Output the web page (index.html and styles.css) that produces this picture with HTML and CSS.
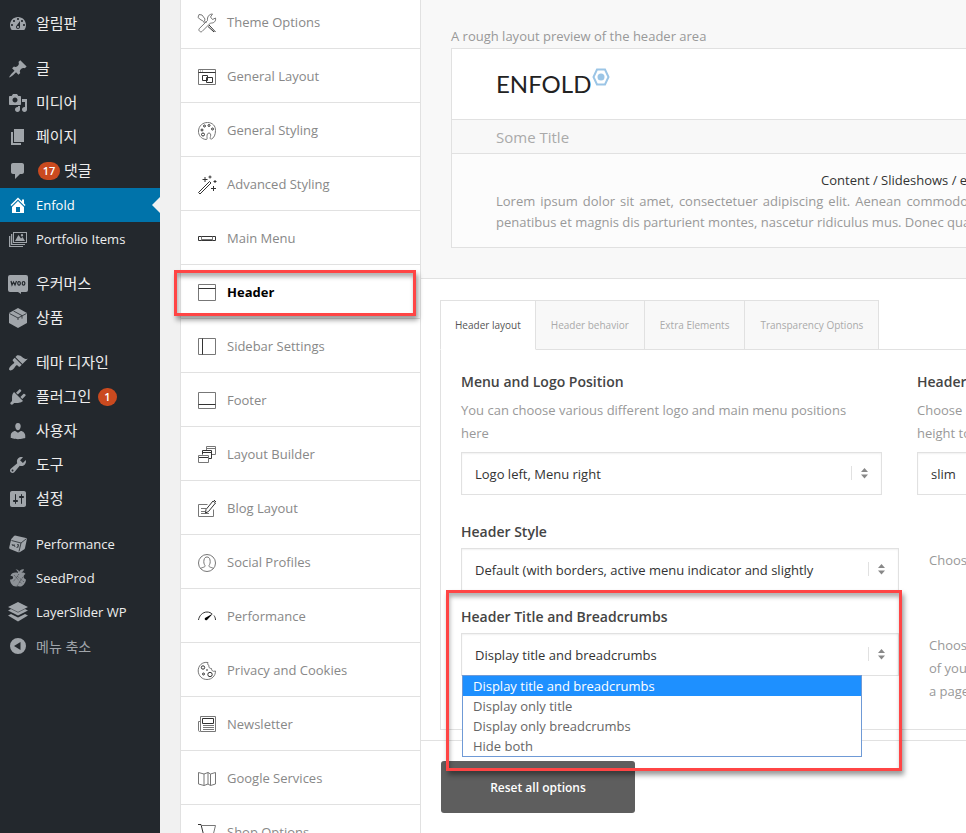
FILE: index.html
```html
<!DOCTYPE html>
<html lang="ko">
<head>
<meta charset="utf-8">
<title>Enfold Theme Options</title>
<link rel="stylesheet" href="styles.css">
</head>
<body>
<div class="app">
  <nav class="wp-menu" aria-label="Admin">
    <a class="wp-item" href="#"><svg class="wp-icon" viewBox="0 0 20 20"><path d="M3.76 16h12.48c1.1-1.37 1.76-3.11 1.76-5 0-4.42-3.58-8-8-8s-8 3.58-8 8c0 1.89.66 3.63 1.76 5zM10 4c.55 0 1 .45 1 1s-.45 1-1 1-1-.45-1-1 .45-1 1-1zM6 6c.55 0 1 .45 1 1s-.45 1-1 1-1-.45-1-1 .45-1 1-1zm8 0c.55 0 1 .45 1 1s-.45 1-1 1-1-.45-1-1 .45-1 1-1zm-5.37 5.55L12 7v6c0 1.1-.9 2-2 2s-2-.9-2-2c0-.57.24-1.08.63-1.45zM4 10c.55 0 1 .45 1 1s-.45 1-1 1-1-.45-1-1 .45-1 1-1zm12 0c.55 0 1 .45 1 1s-.45 1-1 1-1-.45-1-1 .45-1 1-1zm-5 3c0-.55-.45-1-1-1s-1 .45-1 1 .45 1 1 1 1-.45 1-1z"/></svg><span class="ko">알림판</span></a>
    <div class="wp-gap"></div>
    <a class="wp-item" href="#"><svg class="wp-icon" viewBox="0 0 20 20"><path d="M10.44 3.02l1.82-1.82 6.36 6.35-1.83 1.82c-1.05-.68-2.48-.57-3.41.36l-.75.75c-.92.93-1.04 2.35-.35 3.41l-1.83 1.82-2.41-2.41-2.8 2.79c-.42.42-3.38 2.71-3.8 2.29s1.86-3.39 2.28-3.81l2.79-2.79L4.1 9.36l1.83-1.82c1.05.69 2.48.57 3.4-.36l.75-.75c.93-.92 1.05-2.35.36-3.41z"/></svg><span class="ko">글</span></a>
    <a class="wp-item" href="#"><svg class="wp-icon" viewBox="0 0 20 20"><path d="M13 11V4c0-.55-.45-1-1-1h-1.67L9 1H5L3.67 3H2c-.55 0-1 .45-1 1v7c0 .55.45 1 1 1h10c.55 0 1-.45 1-1zM7 4.5c1.38 0 2.5 1.12 2.5 2.5S8.38 9.5 7 9.5 4.5 8.38 4.5 7 5.62 4.5 7 4.5zM14 6h5v10.5c0 1.38-1.12 2.5-2.5 2.5S14 17.88 14 16.5s1.12-2.5 2.5-2.5c.17 0 .34.02.5.05V9h-3V6zm-4 8.05V13h2v3.5c0 1.38-1.12 2.5-2.5 2.5S7 17.88 7 16.5 8.12 14 9.5 14c.17 0 .34.02.5.05z"/></svg><span class="ko">미디어</span></a>
    <a class="wp-item" href="#"><svg class="wp-icon" viewBox="0 0 20 20"><path d="M6 15V2h10v13H6zm-1 1h8v2H3V5h2v11z"/></svg><span class="ko">페이지</span></a>
    <a class="wp-item" href="#"><svg class="wp-icon" viewBox="0 0 20 20"><path d="M5 2h9c1.1 0 2 .9 2 2v7c0 1.1-.9 2-2 2h-2l-5 5v-5H5c-1.1 0-2-.9-2-2V4c0-1.1.9-2 2-2z"/></svg><span class="count count-lead">17</span><span class="ko">댓글</span></a>
    <a class="wp-item wp-current" href="#"><svg class="wp-icon" viewBox="0 0 20 20"><path d="M16 8.5l1.53 1.53-1.06 1.06L10 4.6l-6.47 6.49-1.06-1.06L10 2.5l4 4v-2h2v4zm-6-2.46l6 5.99V18H4v-5.97zM12 17v-5H8v5h4z"/></svg>Enfold</a>
    <a class="wp-item" href="#"><svg class="wp-icon" viewBox="0 0 20 20"><path fill-rule="evenodd" d="M5 3h14v11H5zM6 4v9h12V4zM3 5h1.300v10H17v1H3zM1 7h1.300v10H15v1H1zM7 12l3.500-6 2.500 3.500L14.500 8l2.500 4zM14 5a1.200 1.200 0 1 1 0 2.400A1.200 1.200 0 0 1 14 5z"/></svg>Portfolio Items</a>
    <div class="wp-gap"></div>
    <a class="wp-item" href="#"><svg class="wp-icon" viewBox="0 0 20 20"><path d="M2 1h16q2 0 2 2v13q0 2-2 2h-5v2l-3-2H2q-2 0-2-2V3q0-2 2-2z"/><path class="cut" d="M3 7l1 4 1.500-3L7 11l1.500-4M11 7.500a1.300 1.800 0 1 0 .1 0M15.500 7.500a1.300 1.800 0 1 0 .1 0"/></svg><span class="ko">우커머스</span></a>
    <a class="wp-item" href="#"><svg class="wp-icon" viewBox="0 0 20 20"><path d="M10 0l9 5v10l-9 5-9-5V5z"/><path class="cut thin" d="M1.500 5.500L10 10l8.500-4.500M10 10v2M5.500 3l8.500 4.600v3"/></svg><span class="ko">상품</span></a>
    <div class="wp-gap"></div>
    <a class="wp-item" href="#"><svg class="wp-icon" viewBox="0 0 20 20"><path d="M14.48 11.06L7.41 3.99l1.5-1.5c.5-.56 2.3-.47 3.51.32 1.21.8 1.43 1.28 2.91 2.1 1.18.64 2.45 1.26 4.45.85zm-.71.71L6.7 4.7 4.93 6.470c-.39.39-.39 1.02 0 1.41l1.06 1.06c.39.39.39 1.03 0 1.420-.6.6-1.43 1.11-2.21 1.69-.35.26-.7.53-1.01.84C1.43 14.23.4 16.08 1.4 17.07c.99 1 2.84-.03 4.18-1.36.31-.31.58-.66.85-1.020.57-.78 1.08-1.61 1.69-2.21.39-.39 1.02-.39 1.41 0l1.06 1.06c.39.39 1.02.39 1.41 0z"/></svg><span class="ko">테마 디자인</span></a>
    <a class="wp-item" href="#"><svg class="wp-icon" viewBox="0 0 20 20"><path d="M13.11 4.36L9.87 7.6 8 5.73l3.24-3.24c.35-.34 1.05-.2 1.56.32.52.51.66 1.21.31 1.55zm-8 1.77l.91-1.12 9.01 9.01-1.19.84c-.71.71-2.63 1.16-3.82 1.16H6.14L4.9 17.26c-.59.59-1.54.59-2.12 0-.59-.58-.59-1.53 0-2.12l1.24-1.24v-3.88c0-1.13.4-3.19 1.09-3.89zm7.26 3.97l3.24-3.24c.34-.35 1.04-.21 1.55.31.52.51.66 1.21.31 1.55l-3.24 3.25z"/></svg><span class="ko">플러그인</span><span class="count count-tail">1</span></a>
    <a class="wp-item" href="#"><svg class="wp-icon" viewBox="0 0 20 20"><path d="M10 9.25c-2.27 0-2.73-3.44-2.73-3.44C7 4.02 7.82 2 9.97 2c2.16 0 2.98 2.02 2.71 3.81 0 0-.41 3.44-2.68 3.44zm0 2.57L12.72 10c2.39 0 4.52 2.33 4.52 4.53v2.49s-3.65 1.13-7.24 1.13c-3.65 0-7.24-1.13-7.24-1.13v-2.49c0-2.25 1.94-4.48 4.47-4.48z"/></svg><span class="ko">사용자</span></a>
    <a class="wp-item" href="#"><svg class="wp-icon" viewBox="0 0 20 20"><path d="M16.68 9.77c-1.34 1.34-3.3 1.67-4.95.99l-5.41 6.52c-.99.99-2.59.99-3.58 0s-.99-2.59 0-3.57l6.52-5.42c-.68-1.65-.35-3.61.99-4.95 1.28-1.28 3.12-1.62 4.72-1.06l-2.89 2.89 2.82 2.82 2.86-2.87c.53 1.58.18 3.39-1.08 4.65zM3.81 16.21c.4.39 1.04.39 1.43 0 .4-.4.4-1.04 0-1.43-.39-.4-1.03-.4-1.43 0-.39.39-.39 1.03 0 1.43z"/></svg><span class="ko">도구</span></a>
    <a class="wp-item" href="#"><svg class="wp-icon" viewBox="0 0 20 20"><path d="M18 16V4c0-1.100-.9-2-2-2H4c-1.100 0-2 .9-2 2v12c0 1.100.9 2 2 2h12c1.100 0 2-.9 2-2zM8 11h1c.55 0 1 .45 1 1s-.45 1-1 1H8v1.500c0 .28-.22.5-.5.5s-.5-.22-.5-.5V13H6c-.55 0-1-.45-1-1s.45-1 1-1h1V5.500c0-.28.22-.5.5-.5s.5.22.5.5V11zm5-2h-1c-.55 0-1-.45-1-1s.45-1 1-1h1V5.500c0-.28.22-.5.5-.5s.5.22.5.5V7h1c.55 0 1 .45 1 1s-.45 1-1 1h-1v5.500c0 .28-.22.5-.5.5s-.5-.22-.5-.5V9z"/></svg><span class="ko">설정</span></a>
    <div class="wp-gap"></div>
    <a class="wp-item" href="#"><svg class="wp-icon" viewBox="0 0 20 20"><path d="M7 1.500L18 4q1 .3.800 1.500L17 14q-.3 1-1 1.500L12 18q-1 .5-2 .2L2 15q-1-.5-.8-1.500L3 6q.2-1 1-1.700L6 2z"/><path class="cut thin" d="M3.500 6.500L13 9l5-4M13 9l-2 8.500M4 10l1 2 1-1.500L7 13M9 10.500l2 .5-1.500 1 1 1-2 .5"/></svg>Performance</a>
    <a class="wp-item" href="#"><svg class="wp-icon dim" viewBox="0 0 20 20"><path d="M10 5c0-2-1.500-3-2.500-3.500C10 1 11 2.500 11 4c1-2 3-3 5-2.500-.5 2-2 3-4 3.500 3-1 5 0 5.500 1-2.500 1.500-2.500 4 .5 5.500-.5 4-3.500 7.500-6.500 7-1-.3-2-.3-3 0C5 19 2 15 2 11.500c2 .5 3.500-1 3-2.500C4.500 7.500 3 8 2.500 8 3.500 4.500 7 4 10 5z"/><path class="cut dots" d="M6 7l8 9M11 6L5 14M15 9l-6 9M9 8l7 6"/></svg>SeedProd</a>
    <a class="wp-item" href="#"><svg class="wp-icon" viewBox="0 0 20 20"><path d="M10 0l10 5-10 5L0 5zM0 8.500l3-1.400 7 3.500 7-3.500 3 1.400-10 5zM0 13.500l3-1.400 7 3.500 7-3.500 3 1.400-10 6z"/></svg>LayerSlider WP</a>
    <button class="wp-item wp-collapse" type="button"><svg class="wp-icon" viewBox="0 0 20 20"><path fill-rule="evenodd" d="M10 2a8 8 0 1 1 0 16 8 8 0 0 1 0-16zM12.500 6v8L6 10z"/></svg><span>메뉴 축소</span></button>
  </nav>

  <nav class="tabs-nav" aria-label="Theme options">
    <a class="nav-item" href="#"><svg class="nav-icon" viewBox="0 0 20 20"><path d="M1 4.500L2 1.500l3 .5 3 4-.5 2 2 2M4 7L1 4.500M4 7l1.500.5 2 2.500M10.500 7.500C10 4 12 1 15.500 1L13.500 4l2 2.500L18.500 5c.7 3-1.500 5.500-5 5L5 18.500c-1.500 1.200-4-1-2.800-2.800z"/><path class="strong" d="M12 12l6.500 7M11 13.500l6 5.500"/></svg>Theme Options</a>
    <a class="nav-item" href="#"><svg class="nav-icon" viewBox="0 0 20 20"><path d="M1.500 2.500h17v15h-17z"/><path class="strong" d="M1.500 5.500h17M5.500 8.500h5v5h-5zM9.500 10.500h6v5h-6z"/><path d="M3.500 3.500v1M5.500 3.500v1"/></svg>General Layout</a>
    <a class="nav-item" href="#"><svg class="nav-icon" viewBox="0 0 20 20"><path d="M9 18.500C4 18 1.300 14 1.500 10 1.800 4.500 6 1.500 10.500 1.500c5 0 8.200 3.500 8 8 0 4-1.500 7.500-4 8.500-1.500.5-1.500-1-1-2.500.5-2 0-3.500-1.500-3.500s-2 1.500-2 3.500.5 3-1 3z"/><g class="strong"><circle cx="5" cy="9" r="1"/><circle cx="7.500" cy="5" r="1"/><circle cx="12" cy="4.500" r="1"/><circle cx="15.500" cy="8" r="1"/><circle cx="6" cy="13.500" r="1.500"/></g></svg>General Styling</a>
    <a class="nav-item" href="#"><svg class="nav-icon" viewBox="0 0 20 20"><path class="strong" d="M1.500 17.500l11-11 1.500 1.500-11 11z"/><path class="strong" d="M8 2v5M5.500 4.500h5M16.500 11v5M14 13.500h5M13 .5v3M11.500 2h3M18 5v3M16.500 6.500h3"/></svg>Advanced Styling</a>
    <a class="nav-item" href="#"><svg class="nav-icon" viewBox="0 0 20 20"><path class="strong" d="M1.500 7.500h17v4h-17z"/><path d="M4.500 7.500v4M15.500 7.500v4M4.500 10.500h11"/></svg>Main Menu</a>
    <a class="nav-item nav-active" href="#"><svg class="nav-icon" viewBox="0 0 20 20"><path d="M1.500 1.500h17v16h-17z"/><path class="strong" d="M1.500 5.500h17"/></svg>Header</a>
    <a class="nav-item" href="#"><svg class="nav-icon" viewBox="0 0 20 20"><path d="M1.500 1.500h17v16h-17z"/><path class="strong" d="M5.500 1.500v16"/></svg>Sidebar Settings</a>
    <a class="nav-item" href="#"><svg class="nav-icon" viewBox="0 0 20 20"><path d="M1.500 1.500h17v16h-17z"/><path class="strong" d="M1.500 13.500h17"/></svg>Footer</a>
    <a class="nav-item" href="#"><svg class="nav-icon" viewBox="0 0 20 20"><path d="M9.500 5V1.500h9v8H15M10 3.500h8"/><path class="strong" d="M5.500 9.500v-4h9v8h-3M5.500 7.500h9M1.500 12.500h10"/><path d="M1.500 10.500h10v7h-10z"/></svg>Layout Builder</a>
    <a class="nav-item" href="#"><svg class="nav-icon" viewBox="0 0 20 20"><path d="M10.500 5.500h-9v12h15v-7M4 9.500h5M4 12.500h4M4 14.500h8"/><path class="strong" d="M16 2l2.500 2-7 8.500-3 1.500.5-3.500zM17 1l2 2"/></svg>Blog Layout</a>
    <a class="nav-item" href="#"><svg class="nav-icon" viewBox="0 0 20 20"><circle cx="10" cy="10" r="8.500"/><path d="M3.500 15.500c2-1.500 5-1 4.500-3C7 11 6.500 9.500 7 7c.3-4 5.700-4 6 0 .5 2.500 0 4-1 5.500-.5 2 2.500 1.500 4.500 3"/></svg>Social Profiles</a>
    <a class="nav-item" href="#"><svg class="nav-icon" viewBox="0 0 20 20"><path class="strong" d="M1.500 13c.5-4 4-8 8.500-8 2.500 0 4 1 5 2M17 8.500c1 1.500 1.500 3 1.500 4.500"/><path class="solid" d="M16 6.500l-6 6.500c-1.500 1-3-.5-2-2z"/></svg>Performance</a>
    <a class="nav-item" href="#"><svg class="nav-icon" viewBox="0 0 20 20"><path d="M11 1.500C5 .5 1 5 1.200 10c.3 5 4 8.500 8.800 8.500s8.500-3.500 8.500-8.500c-3 1-4-.5-4-2.500-2 0-3-1-2.500-3-1.500-.5-1.500-2-1-3z"/><g class="strong"><circle cx="6" cy="6.500" r="1.700"/><circle cx="13" cy="13.500" r="2.200"/><circle cx="6.500" cy="13" r="1"/><circle cx="10" cy="9" r=".4"/></g></svg>Privacy and Cookies</a>
    <a class="nav-item" href="#"><svg class="nav-icon" viewBox="0 0 20 20"><path d="M3.500 16V1.500h15v15h-15c-1 0-2 0-2-1v-9h2M6 10.500h11M6 12.500h11M6 14.500h11"/><path class="strong" d="M5.500 3.500h11v5h-11z"/></svg>Newsletter</a>
    <a class="nav-item" href="#"><svg class="nav-icon" viewBox="0 0 20 20"><path d="M1.500 3.500L7 5v11.500L1.500 15zM7 5l4-1.500L13.500 5v11.500L11 15l-4 1.500M13.500 5l5-1.500V15l-5 1.500M11 3.500V15"/></svg>Google Services</a>
    <a class="nav-item" href="#"><svg class="nav-icon" viewBox="0 0 20 20"><path class="strong" d="M1 1.500h3l3 12h10"/><path d="M4.500 2.500h14l-2 8-10 .5"/><circle cx="8" cy="17" r="1.500"/><circle cx="16" cy="17" r="1.500"/></svg>Shop Options</a>
    <div class="callout callout-nav"></div>
  </nav>

  <main class="content">
    <section class="preview">
      <p class="preview-label">A rough layout preview of the header area</p>
      <div class="preview-box">
        <div class="preview-head"><span class="logo">ENFOLD</span><svg class="logo-mark" viewBox="0 0 18 18"><path d="M5 1.500h8L16.500 9 13 16.500H5L1.500 9z"/><circle cx="9" cy="9" r="3.500"/></svg></div>
        <div class="preview-title">Some Title</div>
        <div class="preview-body">
          <p class="preview-lead">Content / Slideshows / etc</p>
          <p class="preview-text">Lorem ipsum dolor sit amet, consectetuer adipiscing elit. Aenean commodo ligula eget dolor. Aenean massa. Cum sociis natoque penatibus et magnis dis parturient montes, nascetur ridiculus mus. Donec quam felis, ultricies nec.</p>
        </div>
      </div>
    </section>

    <section class="settings">
      <div class="tab-strip" role="tablist">
        <button class="tab tab-on" type="button" role="tab" aria-selected="true">Header layout</button>
        <button class="tab" type="button" role="tab">Header behavior</button>
        <button class="tab" type="button" role="tab">Extra Elements</button>
        <button class="tab" type="button" role="tab">Transparency Options</button>
        <div class="tab-rest"></div>
      </div>
      <div class="panel">
        <div class="pair">
          <div class="field">
            <label class="field-title" for="logo-pos">Menu and Logo Position</label>
            <p class="field-desc">You can choose various different logo and main menu positions here</p>
            <div class="picker"><select id="logo-pos"><option>Logo left, Menu right</option></select><svg class="picker-mark" viewBox="0 0 24 14"><path class="bar" d="M1.500 0v14"/><path d="M11 6l3.500-4L18 6zM11 8.500l3.500 4 3.500-4z"/></svg></div>
          </div>
          <div class="field">
            <label class="field-title" for="size">Header Size</label>
            <p class="field-desc">Choose a<br>height to</p>
            <div class="picker"><select id="size"><option>slim</option></select></div>
          </div>
        </div>
        <div class="row">
          <label class="field-title" for="style">Header Style</label>
          <div class="picker"><select id="style"><option>Default (with borders, active menu indicator and slightly</option></select><svg class="picker-mark" viewBox="0 0 24 14"><path class="bar" d="M1.500 0v14"/><path d="M11 6l3.500-4L18 6zM11 8.500l3.500 4 3.500-4z"/></svg></div>
          <p class="row-help">Choose</p>
        </div>
        <div class="row">
          <label class="field-title" for="crumbs">Header Title and Breadcrumbs</label>
          <div class="picker"><select id="crumbs"><option>Display title and breadcrumbs</option></select><svg class="picker-mark" viewBox="0 0 24 14"><path class="bar" d="M1.500 0v14"/><path d="M11 6l3.500-4L18 6zM11 8.500l3.500 4 3.500-4z"/></svg>
            <ul class="menu" role="listbox" aria-label="Header Title and Breadcrumbs">
              <li class="menu-on" role="option" aria-selected="true">Display title and breadcrumbs</li>
              <li role="option">Display only title</li>
              <li role="option">Display only breadcrumbs</li>
              <li role="option">Hide both</li>
            </ul>
          </div>
          <p class="row-help">Choose<br>of your<br>a page</p>
          <div class="callout callout-field"></div>
        </div>
      </div>
    </section>
    <footer class="actions"><button class="reset" type="button">Reset all options</button></footer>
  </main>
</div>
</body>
</html>
```
FILE: styles.css
```css
* { box-sizing: border-box; }
body {
  margin: 0;
  background: #f1f1f1;
  color: #999;
  font: 13px/21px "Open Sans", "Noto Sans CJK KR", sans-serif;
}
p, ul { margin: 0; padding: 0; }
a { color: inherit; text-decoration: none; }
button, select { font: inherit; color: inherit; margin: 0; border: 0; background: none; }

.app { display: flex; height: 100vh; overflow: hidden; }

/* WordPress admin menu */
.wp-menu { flex: 0 0 160px; background: #23282d; color: #eee; padding-top: 7px; }
.wp-item {
  position: relative;
  display: flex;
  align-items: center;
  width: 100%;
  height: 34px;
  padding: 0 8px;
  white-space: nowrap;
}
.wp-gap { height: 11px; }
.wp-icon { flex: none; width: 20px; height: 20px; margin-right: 8px; fill: #a0a5aa; }
.wp-icon .cut { fill: none; stroke: #23282d; stroke-width: 1.2; }
.wp-icon .thin { stroke-width: 0.8; }
.wp-icon .dots { stroke-width: 0.6; stroke-dasharray: 1 1; }
.dim { opacity: 0.85; }
.ko { padding-bottom: 2px; font-size: 15px; }
.wp-current { background: #0073aa; color: #fff; }
.wp-current .wp-icon { fill: #fff; }
.wp-current::after {
  content: "";
  position: absolute;
  right: 0;
  border: 8px solid transparent;
  border-right-color: #f1f1f1;
}
.wp-collapse { color: #a0a5aa; font-size: 14px; }
.count {
  min-width: 18px;
  height: 18px;
  padding: 0 6px;
  border-radius: 9px;
  background: #ca4a1f;
  color: #fff;
  font-size: 11px;
  font-weight: 600;
  line-height: 18px;
  text-align: center;
}
.count-lead { margin: 0 4px 0 2px; padding: 0 4px; min-width: 22px; }
.count-tail { margin-left: 7px; }

/* Theme option sections */
.tabs-nav {
  position: relative;
  flex: 0 0 241px;
  align-self: flex-start;
  margin: -5px 0 0 20px;
  background: #fff;
  border: solid #e1e1e1;
  border-width: 0 1px;
}
.nav-item {
  display: flex;
  align-items: center;
  height: 54px;
  padding: 2px 0 0 16px;
  border-bottom: 1px solid #e1e1e1;
  color: #888;
}
.nav-active { color: #000; font-weight: 700; }
.nav-icon { width: 20px; height: 20px; margin-right: 10px; fill: none; stroke: #777; }
.nav-icon .strong { stroke: #333; }
.nav-icon .solid { fill: #000; stroke: none; }

.callout {
  position: absolute;
  border: 3px solid #ff4545;
  box-shadow: 2px 4px 5px rgba(0, 0, 0, 0.4), inset 1px 4px 4px rgba(0, 0, 0, 0.3);
  pointer-events: none;
}
.callout-nav { top: 275px; left: -7px; right: 4px; height: 46px; }
.callout-field { top: -16px; left: -15px; width: 456px; height: 181px; }

/* Main column */
.content { flex: 1 0 930px; background: #fff; }
.preview { padding: 26px 30px 30px; background: #f8f8f8; border-bottom: 1px solid #e1e1e1; }
.preview-label { margin-bottom: 1px; }
.preview-box { border: 1px solid #e1e1e1; }
.preview-head {
  display: flex;
  align-items: center;
  height: 71px;
  padding-left: 44px;
  background: #fff;
  border-bottom: 1px solid #e1e1e1;
}
.logo { color: #222; font: 24px/28px Lato, sans-serif; }
.logo-mark { width: 18px; height: 18px; margin: 0 0 14px 1px; }
.logo-mark path { fill: none; stroke: #9bc5e6; stroke-width: 2; }
.logo-mark circle { fill: #9bc5e6; }
.preview-title {
  height: 34px;
  padding: 7px 44px;
  border-bottom: 1px solid #e1e1e1;
  color: #aaa;
  font-size: 15px;
}
.preview-body { padding: 16px 44px 14px; background: #fcfcfc; }
.preview-lead { color: #333; text-align: center; }
.preview-text { text-align: justify; }

.settings { padding: 21px 19px 10px; border-bottom: 1px solid #e1e1e1; }
.tab-strip { display: flex; height: 50px; }
.tab {
  padding: 0 15px;
  background: #f8f8f8;
  border: solid #e1e1e1;
  border-width: 1px 1px 1px 0;
  color: #aaa;
  font-size: 10px;
  white-space: nowrap;
}
.tab-on { padding: 0 14px; background: #fff; border-left-width: 1px; border-bottom-color: #fff; color: #555; }
.tab-rest { flex: 1; border-bottom: 1px solid #e1e1e1; }
.panel { padding: 21px 20px 26px; border: 1px solid #e1e1e1; border-top: 0; }
.pair { display: grid; grid-template-columns: 421px 421px; column-gap: 35px; margin-bottom: 26px; }
.field-title { display: block; color: #444; font-size: 14px; font-weight: 600; line-height: 22px; }
.field-desc { margin: 6px 0 7px; padding-right: 20px; line-height: 23px; }
.row {
  position: relative;
  display: grid;
  grid-template-columns: 438px 1fr;
  column-gap: 30px;
  row-gap: 5px;
}
.row .field-title { grid-column: 1 / 3; }
.row + .row { margin-top: -11px; }
.row-help { padding-top: 1px; min-height: 69px; line-height: 23px; }
.picker { position: relative; align-self: start; }
.picker select {
  display: block;
  appearance: none;
  width: 100%;
  height: 43px;
  padding: 1px 13px 0;
  border: 1px solid #e1e1e1;
  background: #fff;
  color: #333;
  box-shadow: inset 0 1px 2px rgba(0, 0, 0, 0.06);
}
.picker-mark { position: absolute; top: 14px; right: 8px; width: 24px; height: 14px; fill: #888; pointer-events: none; }
.picker-mark .bar { stroke: #e1e1e1; }
.menu {
  position: absolute;
  top: 42px;
  left: 1px;
  width: 400px;
  list-style: none;
  background: #fff;
  border: 1px solid #6f9ad6;
  color: #666;
  line-height: 20px;
}
.menu li { padding-left: 10px; }
.menu-on { background: #1e90ff; color: #fff; }

.actions { padding: 20px; }
.reset {
  width: 194px;
  height: 52px;
  border-radius: 3px;
  background: #5e5e5e;
  color: #fff;
  font-size: 12px;
  font-weight: 600;
}
```
